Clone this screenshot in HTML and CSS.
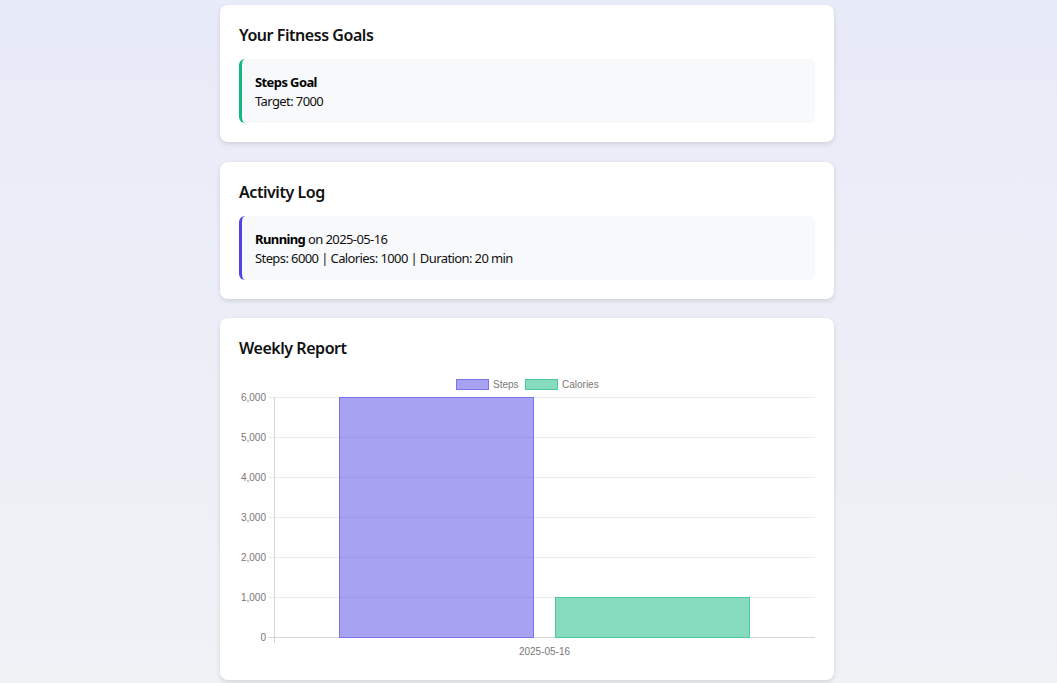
FILE: index.html
```html
<!DOCTYPE html>
<html lang="en">
<head>
<meta charset="utf-8">
<title>Fitness Tracker</title>
<link rel="stylesheet" href="styles.css">
</head>
<body>
<main class="container">
  <section class="card">
    <h3 class="card-title">Your Fitness Goals</h3>
    <div class="item item-goal">
      <div><strong>Steps Goal</strong></div>
      <div>Target: 7000</div>
    </div>
  </section>

  <section class="card">
    <h3 class="card-title">Activity Log</h3>
    <div class="item item-activity">
      <div><strong>Running</strong> on 2025-05-16</div>
      <div>Steps: 6000 | Calories: 1000 | Duration: 20 min</div>
    </div>
  </section>

  <section class="card">
    <h3 class="card-title">Weekly Report</h3>
    <svg class="chart" width="576" height="289" viewBox="0 1 576 289" xmlns="http://www.w3.org/2000/svg">
      <g class="legend">
        <rect x="217.5" y="8.5" width="32" height="10" fill="rgba(79,70,229,0.5)" stroke="#7a74ec" stroke-width="1"/>
        <text x="254" y="17">Steps</text>
        <rect x="286.5" y="8.5" width="32" height="10" fill="rgba(16,185,129,0.5)" stroke="#4cc89e" stroke-width="1"/>
        <text x="323" y="17">Calories</text>
      </g>
      <g class="grid" stroke="#ebebeb" stroke-width="1">
        <line x1="29" y1="26.5" x2="576" y2="26.5"/>
        <line x1="29" y1="66.5" x2="576" y2="66.5"/>
        <line x1="29" y1="106.5" x2="576" y2="106.5"/>
        <line x1="29" y1="146.5" x2="576" y2="146.5"/>
        <line x1="29" y1="186.5" x2="576" y2="186.5"/>
        <line x1="29" y1="226.5" x2="576" y2="226.5"/>
      </g>
      <g class="axis" stroke="#d6d6d6" stroke-width="1">
        <line x1="29" y1="266.5" x2="576" y2="266.5"/>
        <line x1="35.5" y1="26" x2="35.5" y2="272"/>
      </g>
      <g class="ylabels" text-anchor="end">
        <text x="27" y="30">6,000</text>
        <text x="27" y="70">5,000</text>
        <text x="27" y="110">4,000</text>
        <text x="27" y="150">3,000</text>
        <text x="27" y="190">2,000</text>
        <text x="27" y="230">1,000</text>
        <text x="27" y="270">0</text>
      </g>
      <rect x="100.5" y="26.5" width="194" height="240" fill="rgba(79,70,229,0.5)" stroke="#7a74ec" stroke-width="1"/>
      <rect x="316.5" y="226.5" width="194" height="40" fill="rgba(16,185,129,0.5)" stroke="#4cc89e" stroke-width="1"/>
      <text class="xlabel" x="305.5" y="284" text-anchor="middle">2025-05-16</text>
    </svg>
  </section>
</main>
</body>
</html>
```

FILE: styles.css
```css
* {
  box-sizing: border-box;
}

html, body {
  margin: 0;
  height: 100%;
}

body {
  padding: 5px 3px 0 0;
  background: linear-gradient(180deg, #e8ebf8 0%, #f1f2f6 100%);
  font-family: "Noto Sans", "Open Sans", sans-serif;
  color: #111;
  overflow: hidden;
}

.container {
  width: 614px;
  margin: 0 auto;
  display: flex;
  flex-direction: column;
  gap: 19.5px;
}

.card {
  background: #fff;
  border-radius: 8px;
  box-shadow: 0 2px 5px rgba(0, 0, 0, 0.12);
  padding: 20px 19px 19px 19px;
}

.card-title {
  margin: 0 0 11px 0;
  font-size: 16px;
  font-weight: 600;
  letter-spacing: -0.45px;
  line-height: 20px;
  height: 23px;
  color: #111;
}

.item {
  background: #f8f9fb;
  border-radius: 6px;
  border-left: 3px solid #10b981;
  padding: 14px 13px 12px 13px;
  font-size: 13px;
  letter-spacing: -0.6px;
  line-height: 19px;
  color: #111;
}

.item strong {
  font-weight: 700;
  color: #000;
}

.item-activity {
  border-left-color: #4f46e5;
}

.chart {
  display: block;
  font-family: "Liberation Sans", Arial, sans-serif;
  font-size: 10px;
  letter-spacing: 0;
}

.chart text {
  fill: #777;
}
```
